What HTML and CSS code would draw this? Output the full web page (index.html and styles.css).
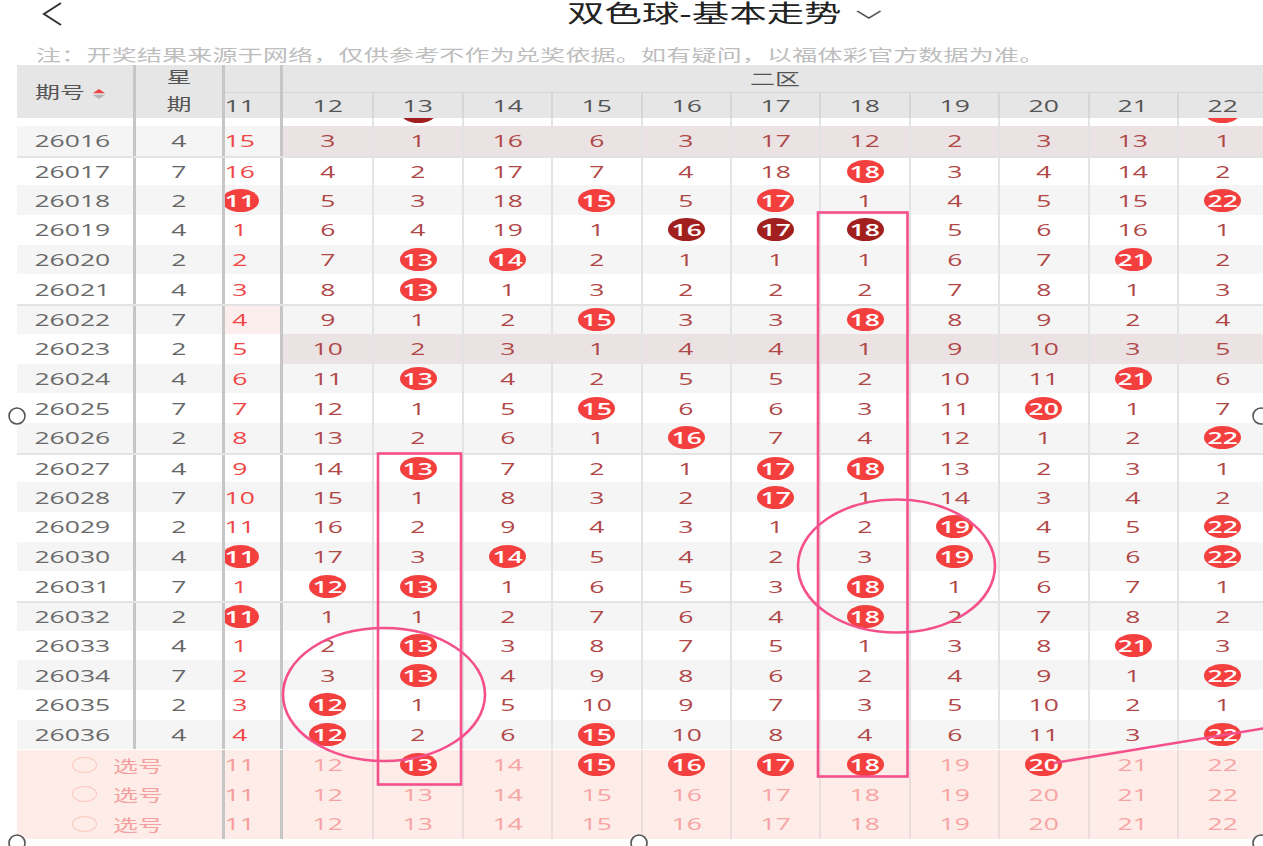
FILE: index.html
```html
<!DOCTYPE html>
<html lang="zh-CN">
<head>
<meta charset="utf-8">
<title>双色球-基本走势</title>
<link rel="stylesheet" href="styles.css">
</head>
<body>
<div class="topbar">
  <svg class="back" width="22" height="24" viewBox="0 0 22 24"><polyline points="19,1 2,12 19,23" fill="none" stroke="#333" stroke-width="2"/></svg>
  <div class="title sx">双色球-基本走势<svg class="chev" width="17" height="9" viewBox="0 0 17 9"><polyline points="1,1 8.5,8 16,1" fill="none" stroke="#555" stroke-width="1.3"/></svg></div>
</div>
<div class="note"><span class="sx">注：开奖结果来源于网络，仅供参考不作为兑奖依据。如有疑问，以福体彩官方数据为准。</span></div>

<div class="tbl">
  <div class="hd">
    <div class="hqh"><span class="sx">期号<svg class="sort" width="8" height="10" viewBox="0 0 8 10"><polygon points="0,4.3 4,0 8,4.3" fill="#f04545"/><polygon points="0,5.7 8,5.7 4,10" fill="#b5b5b5"/></svg></span></div>
    <div class="hxq"><span class="sx">星</span><span class="sx">期</span></div>
    <div class="hc11"><div class="ht"></div><div class="hb"><i><span class="sx">11</span></i></div></div>
    <div class="hz">
      <div class="hzt"><span class="sx">二区</span></div>
      <div class="hzb">
        <div><span class="sx">12</span></div><div><span class="sx">13</span></div><div><span class="sx">14</span></div><div><span class="sx">15</span></div><div><span class="sx">16</span></div><div><span class="sx">17</span></div><div><span class="sx">18</span></div><div><span class="sx">19</span></div><div><span class="sx">20</span></div><div><span class="sx">21</span></div><div><span class="sx">22</span></div>
      </div>
    </div>
  </div>

  <div class="vp">
    <div class="in">
      <div class="r"><div class="qh"></div><div class="xq"></div><div class="c11"><i></i></div><div class="n"></div><div class="n"><b class="d"></b></div><div class="n"></div><div class="n"></div><div class="n"></div><div class="n"></div><div class="n"></div><div class="n"></div><div class="n"></div><div class="n"></div><div class="n"><b></b></div></div>
      <div class="r g hl"><div class="qh"><span>26016</span></div><div class="xq"><span>4</span></div><div class="c11"><i><span>15</span></i></div><div class="n"><span>3</span></div><div class="n"><span>1</span></div><div class="n"><span>16</span></div><div class="n"><span>6</span></div><div class="n"><span>3</span></div><div class="n"><span>17</span></div><div class="n"><span>12</span></div><div class="n"><span>2</span></div><div class="n"><span>3</span></div><div class="n"><span>13</span></div><div class="n"><span>1</span></div></div>
      <div class="r k"><div class="qh"><span>26017</span></div><div class="xq"><span>7</span></div><div class="c11"><i><span>16</span></i></div><div class="n"><span>4</span></div><div class="n"><span>2</span></div><div class="n"><span>17</span></div><div class="n"><span>7</span></div><div class="n"><span>4</span></div><div class="n"><span>18</span></div><div class="n"><b><span>18</span></b></div><div class="n"><span>3</span></div><div class="n"><span>4</span></div><div class="n"><span>14</span></div><div class="n"><span>2</span></div></div>
      <div class="r g"><div class="qh"><span>26018</span></div><div class="xq"><span>2</span></div><div class="c11"><i><b><span>11</span></b></i></div><div class="n"><span>5</span></div><div class="n"><span>3</span></div><div class="n"><span>18</span></div><div class="n"><b><span>15</span></b></div><div class="n"><span>5</span></div><div class="n"><b><span>17</span></b></div><div class="n"><span>1</span></div><div class="n"><span>4</span></div><div class="n"><span>5</span></div><div class="n"><span>15</span></div><div class="n"><b><span>22</span></b></div></div>
      <div class="r"><div class="qh"><span>26019</span></div><div class="xq"><span>4</span></div><div class="c11"><i><span>1</span></i></div><div class="n"><span>6</span></div><div class="n"><span>4</span></div><div class="n"><span>19</span></div><div class="n"><span>1</span></div><div class="n"><b class="d"><span>16</span></b></div><div class="n"><b class="d"><span>17</span></b></div><div class="n"><b class="d"><span>18</span></b></div><div class="n"><span>5</span></div><div class="n"><span>6</span></div><div class="n"><span>16</span></div><div class="n"><span>1</span></div></div>
      <div class="r g"><div class="qh"><span>26020</span></div><div class="xq"><span>2</span></div><div class="c11"><i><span>2</span></i></div><div class="n"><span>7</span></div><div class="n"><b><span>13</span></b></div><div class="n"><b><span>14</span></b></div><div class="n"><span>2</span></div><div class="n"><span>1</span></div><div class="n"><span>1</span></div><div class="n"><span>1</span></div><div class="n"><span>6</span></div><div class="n"><span>7</span></div><div class="n"><b><span>21</span></b></div><div class="n"><span>2</span></div></div>
      <div class="r"><div class="qh"><span>26021</span></div><div class="xq"><span>4</span></div><div class="c11"><i><span>3</span></i></div><div class="n"><span>8</span></div><div class="n"><b><span>13</span></b></div><div class="n"><span>1</span></div><div class="n"><span>3</span></div><div class="n"><span>2</span></div><div class="n"><span>2</span></div><div class="n"><span>2</span></div><div class="n"><span>7</span></div><div class="n"><span>8</span></div><div class="n"><span>1</span></div><div class="n"><span>3</span></div></div>
      <div class="r g k"><div class="qh"><span>26022</span></div><div class="xq"><span>7</span></div><div class="c11 pk"><i><span>4</span></i></div><div class="n"><span>9</span></div><div class="n"><span>1</span></div><div class="n"><span>2</span></div><div class="n"><b><span>15</span></b></div><div class="n"><span>3</span></div><div class="n"><span>3</span></div><div class="n"><b><span>18</span></b></div><div class="n"><span>8</span></div><div class="n"><span>9</span></div><div class="n"><span>2</span></div><div class="n"><span>4</span></div></div>
      <div class="r hl"><div class="qh"><span>26023</span></div><div class="xq"><span>2</span></div><div class="c11"><i><span>5</span></i></div><div class="n"><span>10</span></div><div class="n"><span>2</span></div><div class="n"><span>3</span></div><div class="n"><span>1</span></div><div class="n"><span>4</span></div><div class="n"><span>4</span></div><div class="n"><span>1</span></div><div class="n"><span>9</span></div><div class="n"><span>10</span></div><div class="n"><span>3</span></div><div class="n"><span>5</span></div></div>
      <div class="r g"><div class="qh"><span>26024</span></div><div class="xq"><span>4</span></div><div class="c11"><i><span>6</span></i></div><div class="n"><span>11</span></div><div class="n"><b><span>13</span></b></div><div class="n"><span>4</span></div><div class="n"><span>2</span></div><div class="n"><span>5</span></div><div class="n"><span>5</span></div><div class="n"><span>2</span></div><div class="n"><span>10</span></div><div class="n"><span>11</span></div><div class="n"><b><span>21</span></b></div><div class="n"><span>6</span></div></div>
      <div class="r"><div class="qh"><span>26025</span></div><div class="xq"><span>7</span></div><div class="c11"><i><span>7</span></i></div><div class="n"><span>12</span></div><div class="n"><span>1</span></div><div class="n"><span>5</span></div><div class="n"><b><span>15</span></b></div><div class="n"><span>6</span></div><div class="n"><span>6</span></div><div class="n"><span>3</span></div><div class="n"><span>11</span></div><div class="n"><b><span>20</span></b></div><div class="n"><span>1</span></div><div class="n"><span>7</span></div></div>
      <div class="r g"><div class="qh"><span>26026</span></div><div class="xq"><span>2</span></div><div class="c11"><i><span>8</span></i></div><div class="n"><span>13</span></div><div class="n"><span>2</span></div><div class="n"><span>6</span></div><div class="n"><span>1</span></div><div class="n"><b><span>16</span></b></div><div class="n"><span>7</span></div><div class="n"><span>4</span></div><div class="n"><span>12</span></div><div class="n"><span>1</span></div><div class="n"><span>2</span></div><div class="n"><b><span>22</span></b></div></div>
      <div class="r k"><div class="qh"><span>26027</span></div><div class="xq"><span>4</span></div><div class="c11"><i><span>9</span></i></div><div class="n"><span>14</span></div><div class="n"><b><span>13</span></b></div><div class="n"><span>7</span></div><div class="n"><span>2</span></div><div class="n"><span>1</span></div><div class="n"><b><span>17</span></b></div><div class="n"><b><span>18</span></b></div><div class="n"><span>13</span></div><div class="n"><span>2</span></div><div class="n"><span>3</span></div><div class="n"><span>1</span></div></div>
      <div class="r g"><div class="qh"><span>26028</span></div><div class="xq"><span>7</span></div><div class="c11"><i><span>10</span></i></div><div class="n"><span>15</span></div><div class="n"><span>1</span></div><div class="n"><span>8</span></div><div class="n"><span>3</span></div><div class="n"><span>2</span></div><div class="n"><b><span>17</span></b></div><div class="n"><span>1</span></div><div class="n"><span>14</span></div><div class="n"><span>3</span></div><div class="n"><span>4</span></div><div class="n"><span>2</span></div></div>
      <div class="r"><div class="qh"><span>26029</span></div><div class="xq"><span>2</span></div><div class="c11"><i><span>11</span></i></div><div class="n"><span>16</span></div><div class="n"><span>2</span></div><div class="n"><span>9</span></div><div class="n"><span>4</span></div><div class="n"><span>3</span></div><div class="n"><span>1</span></div><div class="n"><span>2</span></div><div class="n"><b><span>19</span></b></div><div class="n"><span>4</span></div><div class="n"><span>5</span></div><div class="n"><b><span>22</span></b></div></div>
      <div class="r g"><div class="qh"><span>26030</span></div><div class="xq"><span>4</span></div><div class="c11"><i><b><span>11</span></b></i></div><div class="n"><span>17</span></div><div class="n"><span>3</span></div><div class="n"><b><span>14</span></b></div><div class="n"><span>5</span></div><div class="n"><span>4</span></div><div class="n"><span>2</span></div><div class="n"><span>3</span></div><div class="n"><b><span>19</span></b></div><div class="n"><span>5</span></div><div class="n"><span>6</span></div><div class="n"><b><span>22</span></b></div></div>
      <div class="r"><div class="qh"><span>26031</span></div><div class="xq"><span>7</span></div><div class="c11"><i><span>1</span></i></div><div class="n"><b><span>12</span></b></div><div class="n"><b><span>13</span></b></div><div class="n"><span>1</span></div><div class="n"><span>6</span></div><div class="n"><span>5</span></div><div class="n"><span>3</span></div><div class="n"><b><span>18</span></b></div><div class="n"><span>1</span></div><div class="n"><span>6</span></div><div class="n"><span>7</span></div><div class="n"><span>1</span></div></div>
      <div class="r g k"><div class="qh"><span>26032</span></div><div class="xq"><span>2</span></div><div class="c11"><i><b><span>11</span></b></i></div><div class="n"><span>1</span></div><div class="n"><span>1</span></div><div class="n"><span>2</span></div><div class="n"><span>7</span></div><div class="n"><span>6</span></div><div class="n"><span>4</span></div><div class="n"><b><span>18</span></b></div><div class="n"><span>2</span></div><div class="n"><span>7</span></div><div class="n"><span>8</span></div><div class="n"><span>2</span></div></div>
      <div class="r"><div class="qh"><span>26033</span></div><div class="xq"><span>4</span></div><div class="c11"><i><span>1</span></i></div><div class="n"><span>2</span></div><div class="n"><b><span>13</span></b></div><div class="n"><span>3</span></div><div class="n"><span>8</span></div><div class="n"><span>7</span></div><div class="n"><span>5</span></div><div class="n"><span>1</span></div><div class="n"><span>3</span></div><div class="n"><span>8</span></div><div class="n"><b><span>21</span></b></div><div class="n"><span>3</span></div></div>
      <div class="r g"><div class="qh"><span>26034</span></div><div class="xq"><span>7</span></div><div class="c11"><i><span>2</span></i></div><div class="n"><span>3</span></div><div class="n"><b><span>13</span></b></div><div class="n"><span>4</span></div><div class="n"><span>9</span></div><div class="n"><span>8</span></div><div class="n"><span>6</span></div><div class="n"><span>2</span></div><div class="n"><span>4</span></div><div class="n"><span>9</span></div><div class="n"><span>1</span></div><div class="n"><b><span>22</span></b></div></div>
      <div class="r"><div class="qh"><span>26035</span></div><div class="xq"><span>2</span></div><div class="c11"><i><span>3</span></i></div><div class="n"><b><span>12</span></b></div><div class="n"><span>1</span></div><div class="n"><span>5</span></div><div class="n"><span>10</span></div><div class="n"><span>9</span></div><div class="n"><span>7</span></div><div class="n"><span>3</span></div><div class="n"><span>5</span></div><div class="n"><span>10</span></div><div class="n"><span>2</span></div><div class="n"><span>1</span></div></div>
      <div class="r g"><div class="qh"><span>26036</span></div><div class="xq"><span>4</span></div><div class="c11"><i><span>4</span></i></div><div class="n"><b><span>12</span></b></div><div class="n"><span>2</span></div><div class="n"><span>6</span></div><div class="n"><b><span>15</span></b></div><div class="n"><span>10</span></div><div class="n"><span>8</span></div><div class="n"><span>4</span></div><div class="n"><span>6</span></div><div class="n"><span>11</span></div><div class="n"><span>3</span></div><div class="n"><b><span>22</span></b></div></div>
    </div>
  </div>

  <div class="r f"><div class="sel"><i class="ring"></i><span class="lbl">选号</span></div><div class="c11"><i><span>11</span></i></div><div class="n"><span>12</span></div><div class="n"><b><span>13</span></b></div><div class="n"><span>14</span></div><div class="n"><b><span>15</span></b></div><div class="n"><b><span>16</span></b></div><div class="n"><b><span>17</span></b></div><div class="n"><b><span>18</span></b></div><div class="n"><span>19</span></div><div class="n"><b><span>20</span></b></div><div class="n"><span>21</span></div><div class="n"><span>22</span></div></div>
  <div class="r f"><div class="sel"><i class="ring"></i><span class="lbl">选号</span></div><div class="c11"><i><span>11</span></i></div><div class="n"><span>12</span></div><div class="n"><span>13</span></div><div class="n"><span>14</span></div><div class="n"><span>15</span></div><div class="n"><span>16</span></div><div class="n"><span>17</span></div><div class="n"><span>18</span></div><div class="n"><span>19</span></div><div class="n"><span>20</span></div><div class="n"><span>21</span></div><div class="n"><span>22</span></div></div>
  <div class="r f"><div class="sel"><i class="ring"></i><span class="lbl">选号</span></div><div class="c11"><i><span>11</span></i></div><div class="n"><span>12</span></div><div class="n"><span>13</span></div><div class="n"><span>14</span></div><div class="n"><span>15</span></div><div class="n"><span>16</span></div><div class="n"><span>17</span></div><div class="n"><span>18</span></div><div class="n"><span>19</span></div><div class="n"><span>20</span></div><div class="n"><span>21</span></div><div class="n"><span>22</span></div></div>
</div>

<svg class="ov" width="1263" height="846" viewBox="0 0 1263 846">
  <g fill="none" stroke="#f5508c" stroke-width="2.6">
    <rect x="378" y="453.5" width="83" height="331"/>
    <rect x="818" y="212.5" width="89.5" height="564"/>
    <ellipse cx="384" cy="694.5" rx="101" ry="66.5"/>
    <ellipse cx="896.5" cy="566" rx="98.5" ry="66.5"/>
    <line x1="1054" y1="763" x2="1266" y2="728"/>
  </g>
  <g fill="#fff" stroke="#555" stroke-width="1.6">
    <circle cx="17" cy="416" r="8"/>
    <circle cx="1261" cy="416" r="8"/>
    <circle cx="17" cy="843" r="8"/>
    <circle cx="639" cy="843" r="8"/>
    <circle cx="1261" cy="843" r="8"/>
  </g>
</svg>
</body>
</html>
```

FILE: styles.css
```css
* { box-sizing: border-box; margin: 0; padding: 0; }
html, body { width: 1263px; height: 846px; overflow: hidden; background: #fff; }
body {
  position: relative;
  font-family: "Open Sans", "Noto Sans CJK SC", sans-serif;
  color: #333;
}
.sx { display: inline-block; transform: scaleX(1.56); }

/* top bar */
.topbar { height: 28px; display: flex; align-items: center; }
.back { margin-left: 42px; flex: none; }
.title {
  margin-left: 503px;
  font-family: "Liberation Sans", "Noto Sans CJK SC", sans-serif;
  font-size: 24px;
  line-height: 28px;
  color: #222;
  white-space: nowrap;
  transform-origin: 0 50%;
  display: inline-flex;
  align-items: center;
}
.chev { margin-left: 9px; }
.note {
  margin: 17px 0 0 36px;
  height: 20px;
  line-height: 20px;
  font-size: 16px;
  letter-spacing: 0.16px;
  color: #bdbdbd;
  white-space: nowrap;
}
.note .sx { transform-origin: 0 50%; }

/* table */
.tbl { margin-left: 17px; width: 1246px; overflow: hidden; }

.hd { display: flex; height: 52.5px; background: #e6e6e6; color: #555; }
.hd > div { flex: none; }
.hqh {
  width: 119px;
  border-right: 3px solid #c6c6c6;
  display: flex;
  align-items: center;
  padding-left: 18px;
  font-size: 16px;
}
.hqh .sx { transform-origin: 0 50%; white-space: nowrap; }
.sort { margin-left: 4.5px; vertical-align: -1px; }
.hxq {
  width: 89px;
  border-right: 3px solid #c6c6c6;
  display: flex;
  flex-direction: column;
  align-items: center;
  justify-content: center;
  font-size: 16px;
  line-height: 27px;
}
.hc11 { width: 58px; border-right: 3px solid #c6c6c6; overflow: hidden; }
.ht { height: 27.5px; border-bottom: 1.5px solid #d5d5d5; }
.hb { height: 25px; font-size: 17px; }
.hb i, .c11 i {
  font-style: normal;
  width: 80px;
  margin-left: -25px;
  height: 100%;
  display: flex;
  align-items: center;
  justify-content: center;
}
.hz { width: 983.4px; display: flex; flex-direction: column; }
.hzt {
  height: 27.5px;
  border-bottom: 1.5px solid #d5d5d5;
  display: flex;
  align-items: center;
  justify-content: center;
  font-size: 16px;
}
.hzb { height: 25px; display: flex; font-size: 17px; }
.hzb > div {
  flex: none;
  width: 89.4px;
  border-left: 2px solid #d6d6d6;
  display: flex;
  align-items: center;
  justify-content: center;
}
.hzb > div:first-child { border-left: 0; }

/* body */
.vp { height: 632.2px; overflow: hidden; }
.in { margin-top: -21.2px; }
.r { display: flex; height: 29.7px; background: #fff; font-size: 17px; }
.r.g { background: #f5f5f5; }
.r.k { border-top: 2px solid #e3e3e3; }
.r > div { flex: none; display: flex; align-items: center; justify-content: center; }
.r span { display: inline-block; transform: scaleX(1.56); }
.qh { width: 119px; border-right: 3px solid #c6c6c6; color: #6a6a6a; padding-right: 5px; }
.xq { width: 89px; border-right: 3px solid #c6c6c6; color: #666; }
.r > .c11 { width: 58px; border-right: 3px solid #c6c6c6; overflow: hidden; justify-content: flex-start; color: #f04646; }
.r > .c11.pk { background: #fdeeee; }
.n { width: 89.4px; border-left: 2px solid #e3e3e3; color: #b04848; }
.c11 + .n { border-left: 0; }
.hl .n { background: #ebe3e3; }

.r b {
  flex: none;
  display: flex;
  align-items: center;
  justify-content: center;
  width: 37px;
  height: 23px;
  border-radius: 50%;
  background: #f43f3f;
  color: #fff;
  font-weight: 600;
}
.r b.d { background: #a21f1f; }

/* pick rows */
.r.f { background: #fdece7; }
.r > .sel {
  width: 208px;
  border-right: 3px solid #c6c6c6;
  justify-content: flex-start;
  padding-left: 55px;
}
.ring { flex: none; width: 25px; height: 16px; border: 1.5px solid #fbc6bd; border-radius: 50%; }
.r .lbl { margin-left: 16px; font-size: 16px; color: #f5a0a0; transform-origin: 0 50%; }
.f > .c11 { color: #f79a9a; }
.f .n { color: #f8a3a3; border-left-color: #ecdcdc; }
.f .c11 + .n { border-left: 0; }

/* annotations */
.ov { position: absolute; left: 0; top: 0; pointer-events: none; }
```
